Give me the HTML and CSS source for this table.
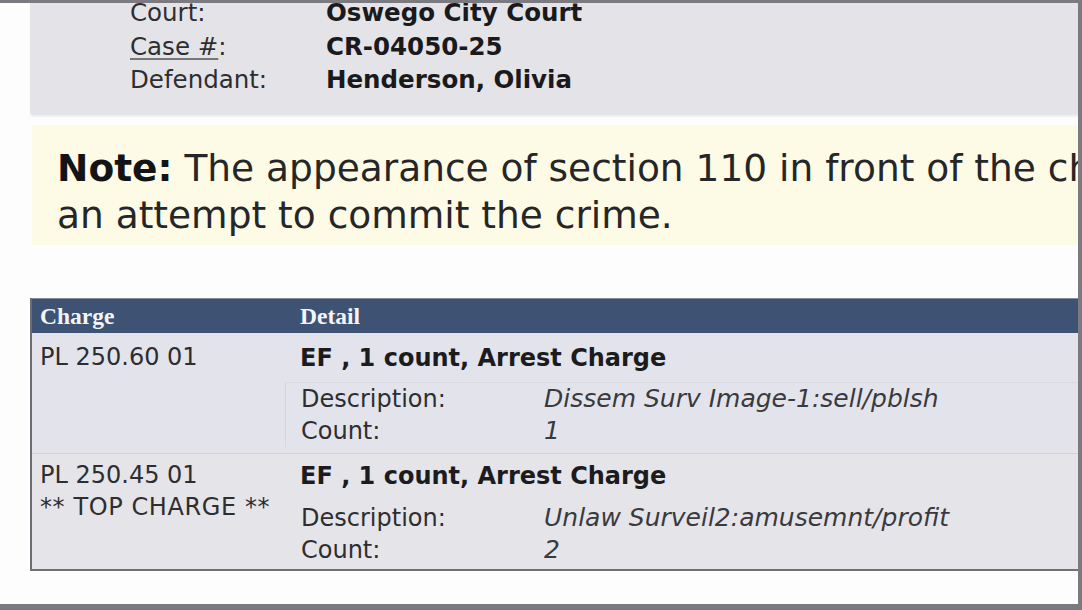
FILE: index.html
```html
<!DOCTYPE html>
<html>
<head>
<meta charset="utf-8">
<link rel="stylesheet" href="styles.css">
</head>
<body>
<div class="screen">
  <section class="case-info">
    <div class="info-grid">
      <span class="label">Court:</span><span class="value">Oswego City Court</span>
      <span class="label"><span class="ul">Case #</span>:</span><span class="value">CR-04050-25</span>
      <span class="label">Defendant:</span><span class="value">Henderson, Olivia</span>
    </div>
  </section>

  <div class="note">
    <p class="note-line"><b>Note:</b> The appearance of section 110 in front of the charge code indicates</p>
    <p class="note-line">an attempt to commit the crime.</p>
  </div>

  <table class="charges">
    <thead>
      <tr><th class="col-charge">Charge</th><th>Detail</th></tr>
    </thead>
    <tbody>
      <tr class="row-1">
        <td class="charge">PL 250.60 01</td>
        <td class="detail">
          <div class="detail-head">EF , 1 count, Arrest Charge</div>
          <div class="detail-box">
            <div class="kv"><span class="k">Description:</span><span class="v">Dissem Surv Image-1:sell/pblsh</span></div>
            <div class="kv"><span class="k">Count:</span><span class="v">1</span></div>
          </div>
        </td>
      </tr>
      <tr class="row-2">
        <td class="charge">PL 250.45 01<br><span class="top">** TOP CHARGE **</span></td>
        <td class="detail">
          <div class="detail-head">EF , 1 count, Arrest Charge</div>
          <div class="detail-box">
            <div class="kv"><span class="k">Description:</span><span class="v">Unlaw Surveil2:amusemnt/profit</span></div>
            <div class="kv"><span class="k">Count:</span><span class="v">2</span></div>
          </div>
        </td>
      </tr>
    </tbody>
  </table>
</div>
</body>
</html>
```

FILE: styles.css
```css
html, body {
  margin: 0;
  padding: 0;
  background: #7a7a80;
}

.screen {
  width: 1078px;
  height: 601px;
  margin-top: 3px;
  background: #fdfdfe;
  overflow: hidden;
  font-family: "DejaVu Sans", Verdana, sans-serif;
  color: #2a2a2c;
}

.case-info {
  margin-left: 30px;
  height: 112px;
  background: #e4e4e8;
  border-bottom-left-radius: 4px;
  box-shadow: 0 2px 2px rgba(0, 0, 0, 0.06);
  padding-left: 100px;
  overflow: hidden;
}

.info-grid {
  display: grid;
  grid-template-columns: 196px auto;
  line-height: 33.5px;
  font-size: 24.5px;
  margin-top: -7px;
}

.label {
  color: #2e2e31;
}

.ul {
  text-decoration: underline;
  text-decoration-color: #777;
  text-underline-offset: 3px;
}

.value {
  font-weight: bold;
  color: #1a1a1c;
}

.note {
  margin: 10px 0 0 32px;
  height: 120px;
  background: #fdfbe5;
  padding: 20px 0 0 25px;
  box-sizing: border-box;
  font-size: 37.5px;
  line-height: 47px;
  color: #262628;
  white-space: nowrap;
}

.note-line {
  margin: 0;
}

.note b {
  color: #141416;
}

.charges {
  margin: 53px 0 0 30px;
  width: 1160px;
  border-collapse: collapse;
  table-layout: fixed;
  border-left: 2px solid #6c6c72;
  border-bottom: 2px solid #707076;
  font-size: 24px;
}

.charges thead tr {
  background: #3e5273;
  border-top: 1px solid #8a8e98;
}

.charges th {
  text-align: left;
  color: #f4f5f8;
  font-family: "Liberation Serif", "Times New Roman", serif;
  font-weight: bold;
  font-size: 23.5px;
  height: 34px;
  padding: 0 0 0 8px;
  vertical-align: middle;
}

.charges th.col-charge {
  width: 252px;
}

.charges td {
  vertical-align: top;
  line-height: 32px;
  color: #2e2e30;
}

.row-1 {
  background: #e3e4eb;
  border-bottom: 1px solid #d2d2d8;
}

.row-2 {
  background: #e5e4e9;
}

.charge {
  padding: 8px 0 6px 8px;
  white-space: nowrap;
}

.top {
  letter-spacing: 0.6px;
}

.row-2 .charge {
  padding-top: 5px;
}

.detail {
  padding: 9px 0 6px 0;
}

.row-2 .detail {
  padding-top: 6px;
  padding-bottom: 3px;
}

.detail-head {
  font-weight: bold;
  color: #1c1c1e;
  padding-left: 8px;
}

.detail-box {
  margin-top: 8px;
  border-left: 1px solid #d6d7de;
  border-top: 1px solid #d9dae0;
  margin-left: -7px;
  padding-left: 15px;
}

.row-2 .detail-box {
  margin-top: 9px;
  border-color: transparent;
}

.kv {
  display: flex;
}

.k {
  width: 243px;
  flex: none;
}

.v {
  font-style: italic;
  font-size: 25px;
  color: #3a3a3e;
}
```
